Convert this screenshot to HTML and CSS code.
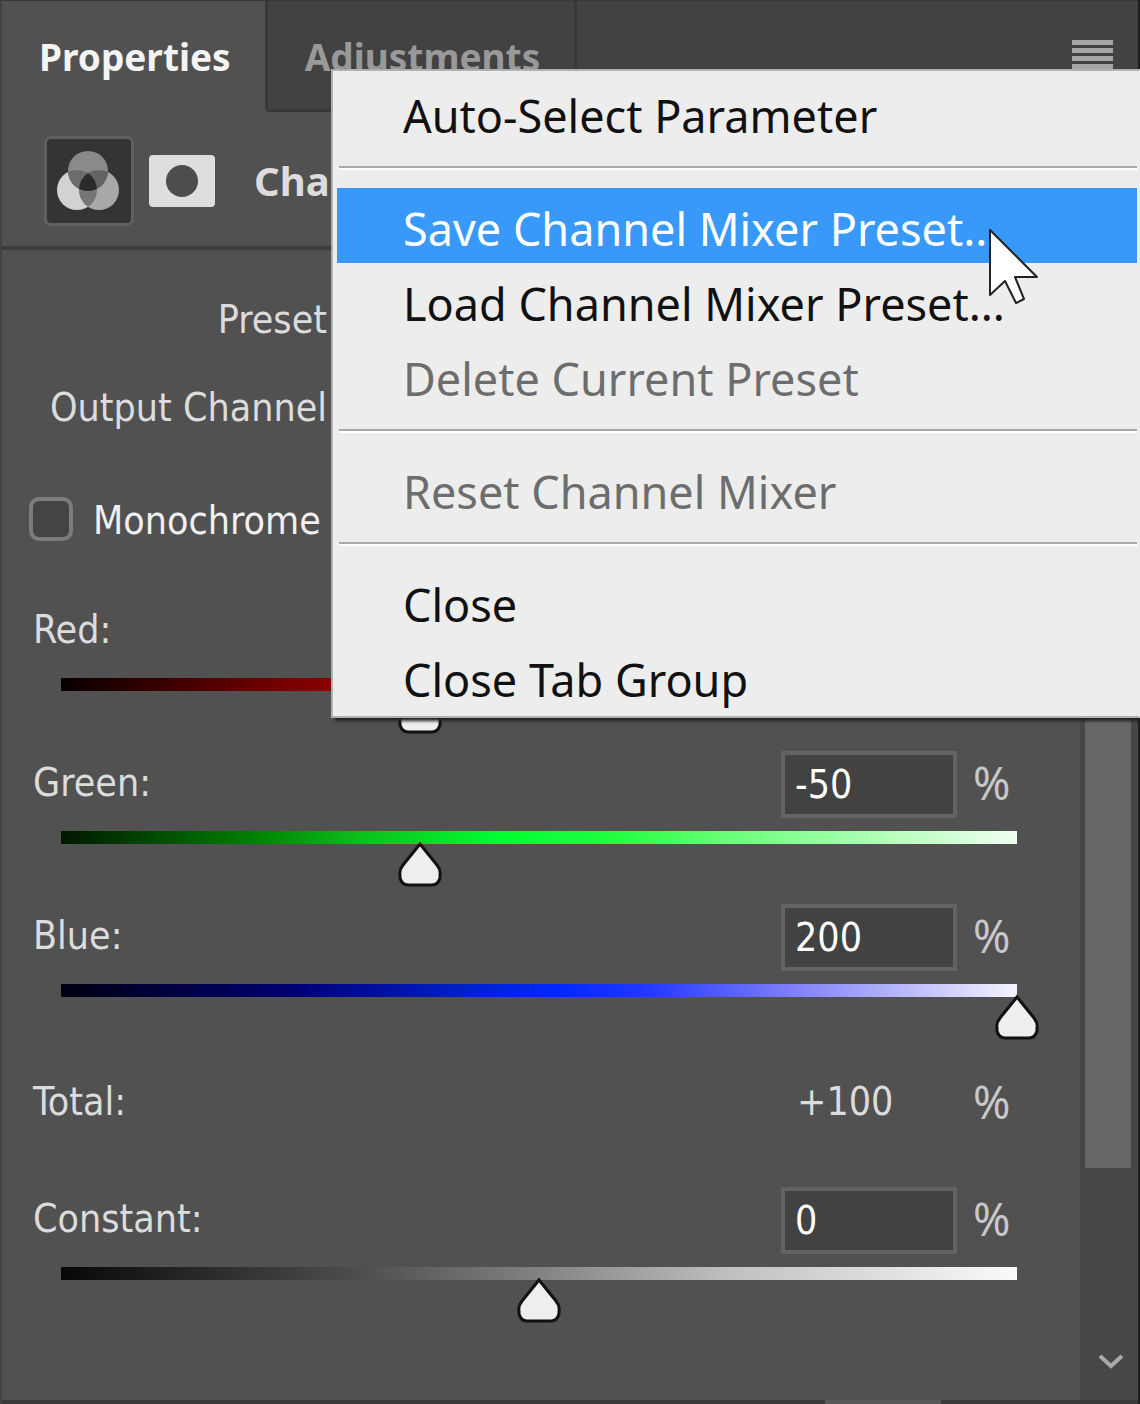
FILE: index.html
```html
<!DOCTYPE html>
<html lang="en">
<head>
    <meta charset="UTF-8">
    <meta name="viewport" content="width=device-width, initial-scale=1.0">
    <title>Properties</title>
    <link rel="stylesheet" href="styles.css">
</head>
<body>
    <div class="panel">
        <header class="tab-bar">
            <button class="tab active" type="button">Properties</button>
            <button class="tab" type="button">Adjustments</button>
            <button class="panel-menu" type="button" aria-label="Panel menu">
                <svg width="42" height="30" viewBox="0 0 42 30" fill="#a6a6a6">
                    <rect width="41" height="5"/>
                    <rect y="8" width="41" height="5"/>
                    <rect y="16" width="41" height="5"/>
                    <rect y="24" width="41" height="5"/>
                </svg>
            </button>
        </header>

        <div class="heading">
            <button class="icon-btn selected" type="button" aria-label="Adjustment">
                <svg width="66" height="64" viewBox="0 0 66 64">
                    <defs>
                        <clipPath id="clipTop"><circle cx="32" cy="22" r="20"/></clipPath>
                        <clipPath id="clipLeft"><circle cx="21" cy="41" r="20"/></clipPath>
                    </defs>
                    <circle cx="21" cy="41" r="20" fill="#d2d2d2"/>
                    <circle cx="43" cy="41" r="20" fill="#a8a8a8"/>
                    <circle cx="32" cy="22" r="20" fill="#8a8a8a"/>
                    <g clip-path="url(#clipTop)">
                        <circle cx="21" cy="41" r="20" fill="#6c6c6c"/>
                        <circle cx="43" cy="41" r="20" fill="#636363"/>
                    </g>
                    <g clip-path="url(#clipLeft)">
                        <circle cx="43" cy="41" r="20" fill="#767676"/>
                        <g clip-path="url(#clipTop)">
                            <circle cx="43" cy="41" r="20" fill="#2b2b2b"/>
                        </g>
                    </g>
                </svg>
            </button>
            <button class="icon-btn" type="button" aria-label="Mask">
                <svg width="68" height="52" viewBox="0 0 68 52">
                    <rect x="1" y="0" width="66" height="52" rx="4" fill="#dedede"/>
                    <circle cx="34" cy="26" r="16" fill="#4d4d4d"/>
                </svg>
            </button>
            <h1>Channel Mixer</h1>
        </div>

        <div class="body">
            <form class="content">
                <div class="field">
                    <label for="preset">Preset</label>
                    <select id="preset"><option>Custom</option></select>
                </div>
                <div class="field">
                    <label for="output">Output Channel</label>
                    <select id="output"><option>Blue</option></select>
                </div>
                <div class="check">
                    <input type="checkbox" id="mono">
                    <label for="mono">Monochrome</label>
                </div>

                <div class="channel">
                    <div class="row">
                        <label for="red">Red:</label>
                        <input class="value" type="text" id="red" value="-50">
                        <span class="unit">%</span>
                    </div>
                    <input class="slider red" type="range" min="-200" max="200" value="-50" aria-label="Red">
                </div>
                <div class="channel">
                    <div class="row">
                        <label for="green">Green:</label>
                        <input class="value" type="text" id="green" value="-50">
                        <span class="unit">%</span>
                    </div>
                    <input class="slider green" type="range" min="-200" max="200" value="-50" aria-label="Green">
                </div>
                <div class="channel">
                    <div class="row">
                        <label for="blue">Blue:</label>
                        <input class="value" type="text" id="blue" value="200">
                        <span class="unit">%</span>
                    </div>
                    <input class="slider blue" type="range" min="-200" max="200" value="200" aria-label="Blue">
                </div>
                <div class="row total">
                    <span class="name">Total:</span>
                    <output class="sum">+100</output>
                    <span class="unit">%</span>
                </div>
                <div class="channel">
                    <div class="row">
                        <label for="constant">Constant:</label>
                        <input class="value" type="text" id="constant" value="0">
                        <span class="unit">%</span>
                    </div>
                    <input class="slider constant" type="range" min="-200" max="200" value="0" aria-label="Constant">
                </div>
            </form>

            <div class="scrollbar">
                <div class="scroll-thumb"></div>
                <button class="scroll-down" type="button" aria-label="Scroll down">
                    <svg width="26" height="16" viewBox="0 0 26 16" fill="none" stroke="#a8a8a8" stroke-width="4">
                        <path d="M2 2 L13 12 L24 2"/>
                    </svg>
                </button>
            </div>
        </div>

        <footer class="bottom-edge"><div class="grip"></div></footer>
    </div>

    <div class="menu" role="menu">
        <button type="button" role="menuitem">Auto-Select Parameter</button>
        <hr>
        <button class="hover" type="button" role="menuitem">Save Channel Mixer Preset...</button>
        <button type="button" role="menuitem">Load Channel Mixer Preset...</button>
        <button type="button" role="menuitem" disabled>Delete Current Preset</button>
        <hr>
        <button type="button" role="menuitem" disabled>Reset Channel Mixer</button>
        <hr>
        <button type="button" role="menuitem">Close</button>
        <button type="button" role="menuitem">Close Tab Group</button>
    </div>

    <svg class="cursor" width="54" height="78" viewBox="0 0 54 78">
        <path d="M2 2 L2 67 L17 53 L28 75 L36 71 L27 49 L49 49 Z" fill="#fff" stroke="#222" stroke-width="2" stroke-linejoin="round"/>
    </svg>
</body>
</html>
```
FILE: styles.css
```css
* {
    box-sizing: border-box;
}

body {
    margin: 0;
    position: relative;
    overflow: hidden;
    background: #515151;
    color: #dcdcdc;
    font-family: "DejaVu Sans Condensed", "DejaVu Sans", sans-serif;
    font-size: 39px;
    line-height: 48px;
}

button, input, select {
    font: inherit;
    color: inherit;
    margin: 0;
}

button {
    border: 0;
    padding: 0;
    background: none;
}

.panel {
    min-height: 100vh;
    display: flex;
    flex-direction: column;
    border-left: 2px solid #424242;
    border-right: 2px solid #1e1e1e;
}

/* Tabs */
.tab-bar {
    display: flex;
    height: 112px;
    background: #424242;
    border-top: 1px solid #383838;
}

.tab {
    padding: 4px 34px 0 37px;
    font-family: "Noto Sans", sans-serif;
    font-size: 37px;
    font-weight: bold;
    color: #999;
    border-right: 3px solid #383838;
    border-bottom: 3px solid #383838;
}

.tab.active {
    color: #f4f4f4;
    background: #515151;
    border-bottom-color: #515151;
}

.panel-menu {
    flex: 1;
    display: flex;
    justify-content: flex-end;
    padding: 39px 24px 0 0;
    border-bottom: 3px solid #383838;
}

/* Heading */
.heading {
    display: flex;
    align-items: center;
    gap: 14px;
    height: 138px;
    padding: 4px 0 0 42px;
    border-bottom: 4px solid #3c3c3c;
}

.icon-btn {
    display: flex;
    align-items: center;
    justify-content: center;
}

.icon-btn.selected {
    width: 90px;
    height: 90px;
    background: #343434;
    border: 3px solid #606060;
    border-radius: 7px;
}

.heading h1 {
    margin: 0 0 0 24px;
    font-family: "Noto Sans", sans-serif;
    font-size: 40px;
    font-weight: bold;
}

/* Body */
.body {
    flex: 1;
    display: flex;
}

.content {
    flex: 1;
    padding: 37px 54px 0 31px;
}

.field {
    display: flex;
    align-items: center;
    height: 66px;
    margin-bottom: 22px;
}

.field label {
    width: 294px;
    text-align: right;
}

.field select {
    flex: 1;
    height: 66px;
    margin-left: 16px;
    background: #424242;
    border: 3px solid #636363;
}

.check {
    display: flex;
    align-items: center;
    gap: 20px;
    height: 66px;
    margin: 45px 0 46px -4px;
    color: #f0f0f0;
}

.check input {
    appearance: none;
    width: 44px;
    height: 44px;
    background: #444;
    border: 4px solid #7c7c7c;
    border-radius: 10px;
}

.check label {
    padding-top: 4px;
}

.channel {
    height: 153px;
}

.row {
    display: flex;
    align-items: center;
    height: 67px;
}

.row label, .row .name {
    flex: 1;
    padding-bottom: 3px;
}

.value {
    width: 176px;
    height: 67px;
    padding: 0 10px;
    background: #424242;
    border: 4px solid #636363;
    color: #fff;
}

.sum {
    width: 160px;
    padding-bottom: 3px;
}

.unit {
    width: 69px;
    padding: 0 0 4px 16px;
    font-family: "Noto Sans", sans-serif;
    font-size: 45px;
    color: #c8c8c8;
}

.total {
    margin: 13px 0 50px;
}

/* Sliders */
.slider {
    appearance: none;
    display: block;
    width: calc(100% + 7px);
    height: 54px;
    margin: 13px 0 0 6px;
    background-color: transparent;
    background-repeat: no-repeat;
    background-position: 22px 0;
    background-size: calc(100% - 44px) 13px;
}

.slider::-webkit-slider-runnable-track {
    height: 54px;
}

.slider::-webkit-slider-thumb {
    appearance: none;
    width: 44px;
    height: 46px;
    margin-top: 10px;
    background: url("data:image/svg+xml,%3Csvg xmlns='http://www.w3.org/2000/svg' viewBox='0 0 44 46'%3E%3Cpath d='M22 3 L39 24 Q43 29 42 34 L42 37 Q40 44 34 44 L10 44 Q4 44 2 37 L2 34 Q1 29 5 24 Z' fill='%23eee' stroke='%23111' stroke-width='3'/%3E%3C/svg%3E") no-repeat;
}

.slider.red {
    background-image: linear-gradient(to right, #080000, #900000 29%, #f00 50%, #fff);
}

.slider.green {
    background-image: linear-gradient(to right, #001800, #008000 20%, #0cbe1c 31%, #00ff30 46%, #20ff40 58%, #60ff70 68%, #f0fff0);
}

.slider.blue {
    background-image: linear-gradient(to right, #000010, #000078 25%, #0020c8 42%, #0028ff 52%, #2038ff 61%, #7878f8 75%, #f4f4ff);
}

.slider.constant {
    background-image: linear-gradient(to right, #080808, #505050 32%, #828282 50%, #c0c0c0 70%, #fafafa);
}

/* Scrollbar */
.scrollbar {
    width: 58px;
    display: flex;
    flex-direction: column;
    justify-content: space-between;
    padding: 0 2px 30px 5px;
    background: #474747;
}

.scroll-thumb {
    width: 46px;
    height: 82%;
    background: #666;
}

.scroll-down {
    display: flex;
    justify-content: center;
}

.bottom-edge {
    height: 4px;
    background: #3a3a3a;
}

.grip {
    width: 116px;
    height: 4px;
    margin-left: auto;
    margin-right: 197px;
    background: #585858;
}

/* Popup menu */
.menu {
    position: absolute;
    top: 69px;
    left: 331px;
    right: 0;
    padding: 4px 2px 2px 4px;
    background: #ededed;
    border: 2px solid #b0b0b0;
    border-right: 1px solid #ededed;
    box-shadow: 4px 3px 3px #222;
    font-family: "Noto Sans", sans-serif;
    font-size: 45px;
    color: #111;
}

.menu button {
    display: block;
    width: 100%;
    height: 75px;
    padding: 7px 0 0 66px;
    text-align: left;
    line-height: 60px;
}

.menu button.hover {
    background: #3899fa;
    color: #fff;
}

.menu button:disabled {
    color: #6d6d6d;
}

.menu hr {
    height: 4px;
    margin: 16px 0 18px 2px;
    border: 0;
    border-top: 2px solid #a8a8a8;
    background: #fff;
}

.cursor {
    position: absolute;
    top: 228px;
    left: 988px;
}
```
